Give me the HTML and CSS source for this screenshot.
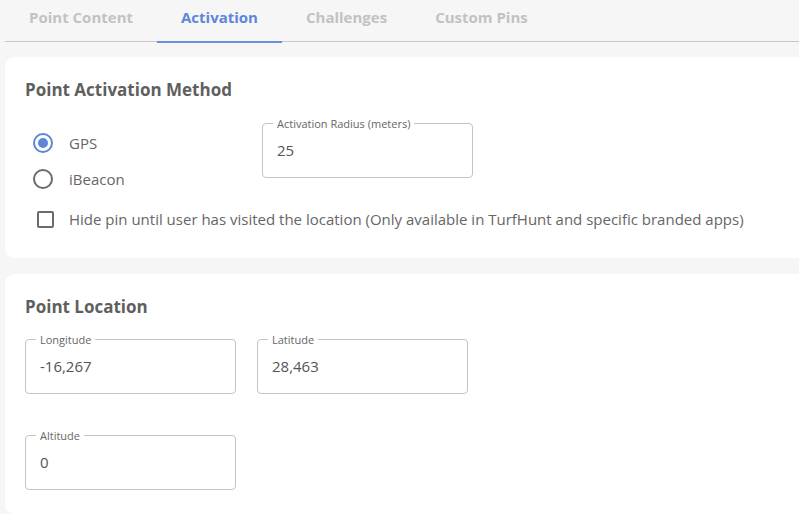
FILE: index.html
```html
<!DOCTYPE html>
<html lang="en">
<head>
<meta charset="utf-8">
<title>Point Activation</title>
<link rel="stylesheet" href="styles.css">
</head>
<body>
<div class="page">
  <nav class="tabs">
    <div class="tab">Point Content</div>
    <div class="tab active">Activation</div>
    <div class="tab">Challenges</div>
    <div class="tab">Custom Pins</div>
  </nav>

  <section class="card">
    <h2 class="card-title">Point Activation Method</h2>
    <div class="method-row">
      <div class="radios">
        <label class="radio-row">
          <span class="radio checked"><span class="dot"></span></span>
          <span class="label">GPS</span>
        </label>
        <label class="radio-row">
          <span class="radio"></span>
          <span class="label">iBeacon</span>
        </label>
      </div>
      <fieldset class="field">
        <legend>Activation Radius (meters)</legend>
        <div class="value">25</div>
      </fieldset>
    </div>
    <label class="check-row">
      <span class="checkbox"></span>
      <span class="label">Hide pin until user has visited the location (Only available in TurfHunt and specific branded apps)</span>
    </label>
  </section>

  <section class="card">
    <h2 class="card-title">Point Location</h2>
    <div class="field-grid">
      <fieldset class="field">
        <legend>Longitude</legend>
        <div class="value">-16,267</div>
      </fieldset>
      <fieldset class="field">
        <legend>Latitude</legend>
        <div class="value">28,463</div>
      </fieldset>
      <fieldset class="field">
        <legend>Altitude</legend>
        <div class="value">0</div>
      </fieldset>
    </div>
  </section>
</div>
</body>
</html>
```

FILE: styles.css
```css
html, body {
  margin: 0;
  padding: 0;
  background: #f6f6f6;
  overflow: hidden;
}

body {
  font-family: "Open Sans", "Liberation Sans", sans-serif;
  color: #666666;
}

.page {
  width: 840px;
  padding-left: 5px;
}

.tabs {
  display: flex;
  border-bottom: 1px solid #c8c8c8;
  height: 41px;
}

.tab {
  padding: 6px 24px 0;
  height: 35px;
  line-height: 22px;
  font-size: 15px;
  font-weight: 700;
  color: #c2c2c2;
  border-bottom: 2px solid transparent;
}

.tab.active {
  color: #5e86d8;
  border-bottom-color: #6a8fdc;
}

.card {
  background: #ffffff;
  border-radius: 9px;
  margin-top: 15px;
  padding: 21px 20px 27px;
}

.card + .card {
  margin-top: 16px;
  padding-bottom: 24px;
}

.card-title {
  margin: 0;
  font-size: 17px;
  line-height: 24px;
  font-weight: 700;
  color: #5f5f5f;
}

.method-row {
  display: flex;
  align-items: flex-start;
  margin-top: 14px;
}

.radios {
  width: 237px;
  padding-top: 9px;
}

.radio-row {
  display: flex;
  align-items: center;
  height: 36px;
}

.radio {
  box-sizing: border-box;
  width: 20px;
  height: 20px;
  margin-left: 8px;
  border: 2px solid #6b6b6b;
  border-radius: 50%;
  display: flex;
  align-items: center;
  justify-content: center;
}

.radio.checked {
  border-color: #5e86d8;
}

.dot {
  width: 10px;
  height: 10px;
  border-radius: 50%;
  background: #5e86d8;
}

.label {
  font-size: 15px;
  line-height: 22px;
  color: #666666;
}

.radio-row .label {
  margin-left: 16px;
}

.field {
  margin: 0;
  padding: 0 0 0 10px;
  width: 211px;
  box-sizing: border-box;
  border: 1px solid #c4c4c4;
  border-radius: 4px;
  min-width: 0;
}

.field legend {
  padding: 0 4px;
  font-size: 11px;
  line-height: 15px;
  color: #666666;
}

.field .value {
  padding: 8px 0 16px 4px;
  font-size: 15px;
  line-height: 22px;
  color: #555555;
}

.check-row {
  display: flex;
  align-items: center;
  margin-top: 10px;
  height: 24px;
}

.checkbox {
  box-sizing: border-box;
  width: 17px;
  height: 17px;
  margin-left: 12px;
  margin-right: 15px;
  border: 2px solid #6b6b6b;
  border-radius: 2px;
}

.field-grid {
  display: grid;
  grid-template-columns: 211px 211px;
  column-gap: 21px;
  row-gap: 34px;
  margin-top: 13px;
}
```
